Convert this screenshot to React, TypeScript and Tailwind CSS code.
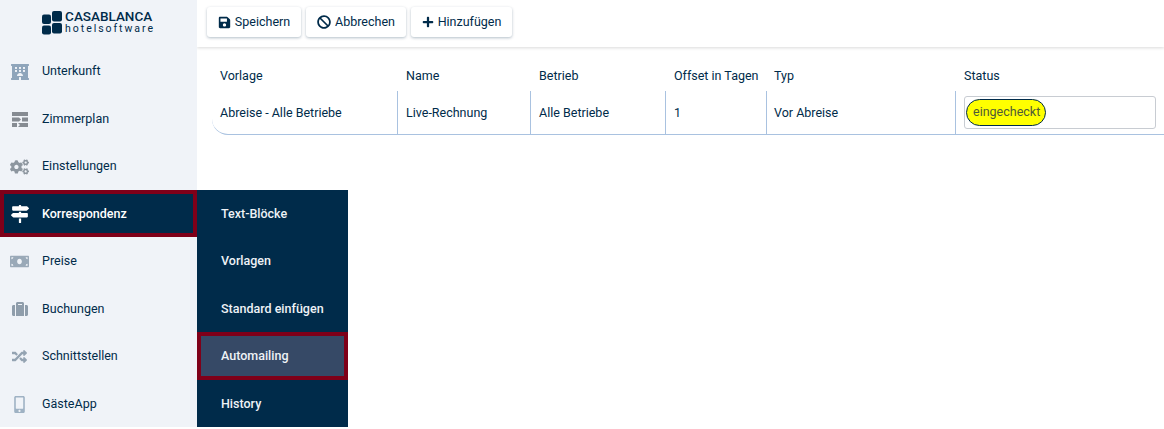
import { FaBan, FaCogs, FaHotel, FaMapSigns, FaMobileAlt, FaMoneyBill, FaPlus, FaRandom, FaSave, FaSuitcase } from 'react-icons/fa';
import type { ReactNode } from 'react';

const navItems: { label: string; icon: ReactNode; active?: boolean }[] = [
  { label: 'Unterkunft', icon: <FaHotel className="h-[18px] w-[18px] text-[#8fa5bb]" /> },
  {
    label: 'Zimmerplan',
    icon: (
      <svg viewBox="0 0 16 15" className="h-[15px] w-[16px] text-[#868b92]" fill="currentColor">
        <path d="M0 0h16v4H0zM0 5.5h7l2 2-2 2H0zM10 5.5h6v4h-6zM0 11h5v4H0zM6 11l2 2-2 2h10v-4z" />
      </svg>
    ),
  },
  { label: 'Einstellungen', icon: <FaCogs className="h-[18px] w-[19px] text-[#8d969f]" /> },
  { label: 'Korrespondenz', icon: <FaMapSigns className="h-[18px] w-[18px]" />, active: true },
  { label: 'Preise', icon: <FaMoneyBill className="h-[19px] w-[20px] text-[#9aa9b8]" /> },
  { label: 'Buchungen', icon: <FaSuitcase className="h-[16px] w-[16px] text-[#8f9dab]" /> },
  { label: 'Schnittstellen', icon: <FaRandom className="h-[15px] w-[15px] text-[#94a3b2]" /> },
  { label: 'GästeApp', icon: <FaMobileAlt className="h-[17px] w-[17px] text-[#9fb2c4]" /> },
];

const subItems = ['Text-Blöcke', 'Vorlagen', 'Standard einfügen', 'Automailing', 'History'];

const columns = [
  { title: 'Vorlage', value: 'Abreise - Alle Betriebe', width: 'w-[186px]', pad: 'pl-[8px]' },
  { title: 'Name', value: 'Live-Rechnung', width: 'w-[133px]', pad: 'pl-[8px]' },
  { title: 'Betrieb', value: 'Alle Betriebe', width: 'w-[135px]', pad: 'pl-[8px]' },
  { title: 'Offset in Tagen', value: '1', width: 'w-[101px]', pad: 'pl-[8px]' },
  { title: 'Typ', value: 'Vor Abreise', width: 'w-[189px]', pad: 'pl-[7px]' },
];

const Logo = () => (
  <div className="flex items-center justify-center gap-[3px] pb-[2px]">
    <svg viewBox="0 0 20 24" className="h-[24px] w-[20px]" fill="#002b4a">
      <rect x="0" y="3.5" width="9" height="9.5" rx="2" />
      <rect x="0" y="14.5" width="9" height="9" rx="2" />
      <rect x="10" y="0" width="10" height="10.5" rx="2" />
      <rect x="10" y="12" width="10" height="10.5" rx="2" />
    </svg>
    <div className="flex flex-col text-[#002b4a]">
      <span className="text-[13.5px] font-medium leading-[13px]">CASABLANCA</span>
      <span className="text-[10.5px] leading-[12px] tracking-[1.95px]">hotelsoftware</span>
    </div>
  </div>
);

const ToolButton = ({ icon, label, width }: { icon: ReactNode; label: string; width: string }) => (
  <button
    type="button"
    className={`${width} flex h-[30px] items-center justify-center gap-[4px] rounded-[3px] bg-white text-[12.5px] text-[#002b4a] shadow-[0_1px_3px_rgba(0,43,74,0.3)]`}
  >
    {icon}
    {label}
  </button>
);

const App = () => {
  return (
    <div className="flex h-[429px] w-[1164px] overflow-hidden bg-white font-['Roboto',sans-serif] text-[12.5px] text-[#002b4a]">
      <aside className="relative z-10 h-[427px] w-[197px] shrink-0 bg-[#f0f3f8]">
        <div className="flex h-[47px] items-center justify-center">
          <Logo />
        </div>
        {navItems.map((item) => (
          <div
            key={item.label}
            className={
              item.active
                ? 'flex h-[47.5px] items-center border-4 border-[#7f0019] bg-[#002b4a] pl-[6px] pt-[2px] font-medium text-white'
                : 'flex h-[47.5px] items-center pl-[10px] pt-[2px]'
            }
          >
            <span className="flex w-[32px] justify-center pr-[13px]">{item.icon}</span>
            {item.label}
          </div>
        ))}
        <div className="absolute left-[197px] top-[190px] flex h-[237px] w-[151px] flex-col bg-[#002b4a] font-medium text-[#eef2f6]">
          {subItems.map((sub) =>
            sub === 'Automailing' ? (
              <div key={sub} className="flex h-[47.5px] items-center border-4 border-[#7f0019] bg-[#364966] pl-[20px]">
                {sub}
              </div>
            ) : (
              <div key={sub} className={sub === 'History' ? 'flex h-[47.5px] items-center pl-[24px] pt-[2px]' : 'flex h-[47.5px] items-center pl-[24px] pt-[1px]'}>
                {sub}
              </div>
            ),
          )}
        </div>
      </aside>
      <main className="min-w-0 flex-1">
        <div className="flex h-[47px] items-center gap-[5px] pb-[3px] pl-[10px] shadow-[0_1px_3px_rgba(0,0,0,0.15)]">
          <ToolButton width="w-[94px]" icon={<FaSave className="h-[13px] w-[13px]" />} label="Speichern" />
          <ToolButton width="w-[100px]" icon={<FaBan className="h-[14px] w-[14px]" />} label="Abbrechen" />
          <ToolButton width="w-[101px]" icon={<FaPlus className="h-[12px] w-[12px]" />} label="Hinzufügen" />
        </div>
        <div className="pl-[15px] pt-[15px]">
          <div className="flex h-[29px] items-center">
            {columns.map((col) => (
              <div key={col.title} className={`${col.width} ${col.pad}`}>
                {col.title}
              </div>
            ))}
            <div className="pl-[8px]">Status</div>
          </div>
          <div className="flex h-[44px] rounded-bl-[16px] border-b border-[#a9c2e0]">
            {columns.map((col) => (
              <div key={col.title} className={`${col.width} ${col.pad} flex items-center border-r border-[#a9c2e0] pt-[2px]`}>
                {col.value}
              </div>
            ))}
            <div className="flex flex-1 items-center pl-[8px]">
              <div className="flex h-[33px] w-[192px] items-center rounded-[3px] border border-[#c8ccd2] pl-[1px]">
                <span className="flex h-[27px] items-center rounded-full border border-[#002b4a] bg-[#ffff00] pl-[6px] pr-[5px] text-[#4d5a3a]">
                  eingecheckt
                </span>
              </div>
            </div>
          </div>
        </div>
      </main>
    </div>
  );
};

export default App;
